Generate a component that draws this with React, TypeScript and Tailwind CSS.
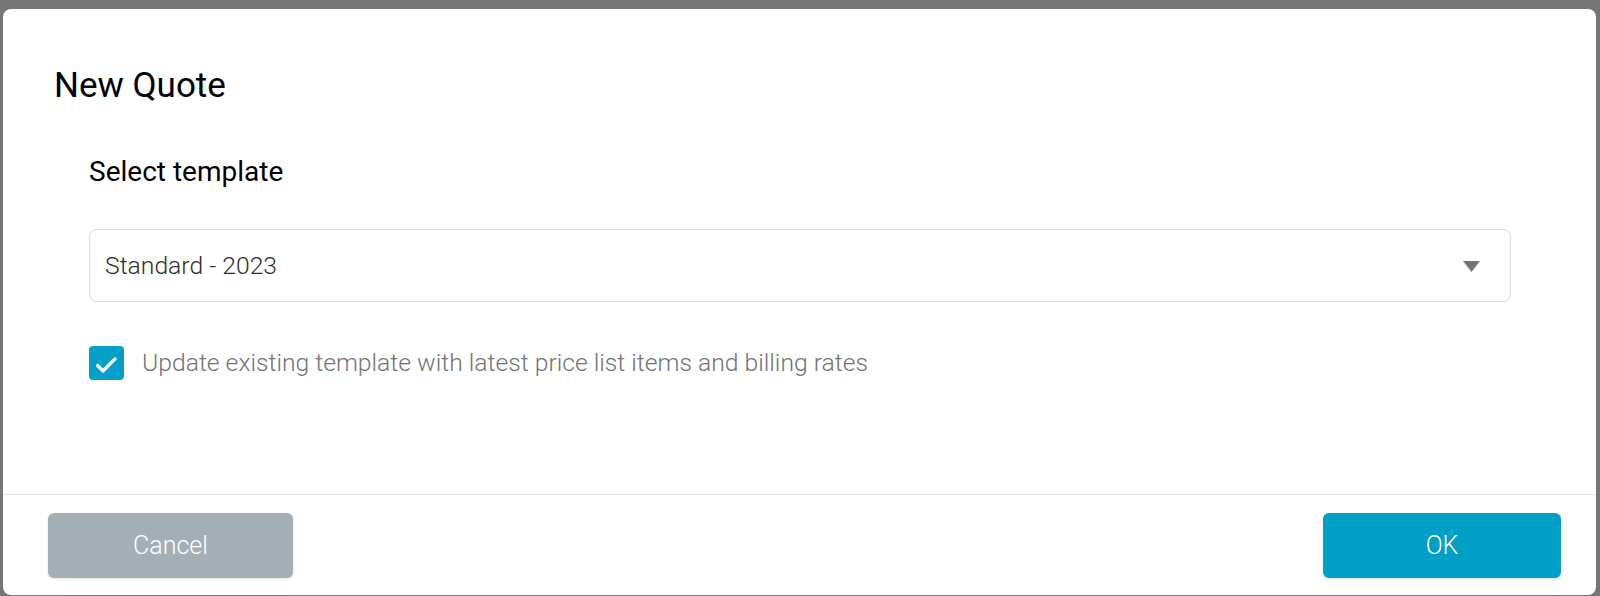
export default function App() {
  return (
    <div className="h-[596px] w-[1600px] overflow-hidden bg-[#767676] pl-[3px] pr-[4px] pt-[9px] font-['Roboto',sans-serif]">
      <div className="flex h-[586px] flex-col rounded-[8px] bg-white">
        <div className="flex-1 pl-[51px] pt-[56px]">
          <h2 className="text-[35px] leading-[41px] font-normal text-black">New Quote</h2>
          <div className="mt-[49px] pl-[35px]">
            <p className="text-[28px] leading-[33px] text-black">Select template</p>
            <div className="mt-[41px] flex h-[73px] w-[1422px] items-center justify-between rounded-[8px] border border-[#dcdcdc] pl-[15px] pr-[30px]">
              <span className="text-[24.7px] font-light text-[#2e2e2e]">Standard - 2023</span>
              <svg width="17" height="11" viewBox="0 0 17 11" className="mt-[2px]">
                <path d="M0 0h17l-8.5 11z" fill="#757575" />
              </svg>
            </div>
            <label className="mt-[42px] flex items-center gap-[18px]">
              <span className="flex h-[34px] w-[35px] items-center justify-center rounded-[4px] bg-[#05a0c8]">
                <svg width="35" height="34" viewBox="0 0 35 34">
                  <path d="M8.5 19.5l5.5 5.5 12-12" fill="none" stroke="white" strokeWidth="3.2" strokeLinecap="round" strokeLinejoin="round" />
                </svg>
              </span>
              <span className="text-[24.7px] font-light text-[#737373]">Update existing template with latest price list items and billing rates</span>
            </label>
          </div>
        </div>
        <div className="flex items-center justify-between border-t border-[#e3e8ec] pb-[17px] pl-[45px] pr-[35px] pt-[18px]">
          <button className="h-[65px] w-[245px] rounded-[6px] bg-[#a3aeb5] text-[25px] font-light text-white shadow-[0_1px_3px_rgba(0,0,0,0.12)]">
            Cancel
          </button>
          <button className="h-[65px] w-[238px] rounded-[6px] bg-[#00a0c6] text-[25px] font-light text-white shadow-[0_1px_3px_rgba(0,0,0,0.12)]">
            OK
          </button>
        </div>
      </div>
    </div>
  );
}
